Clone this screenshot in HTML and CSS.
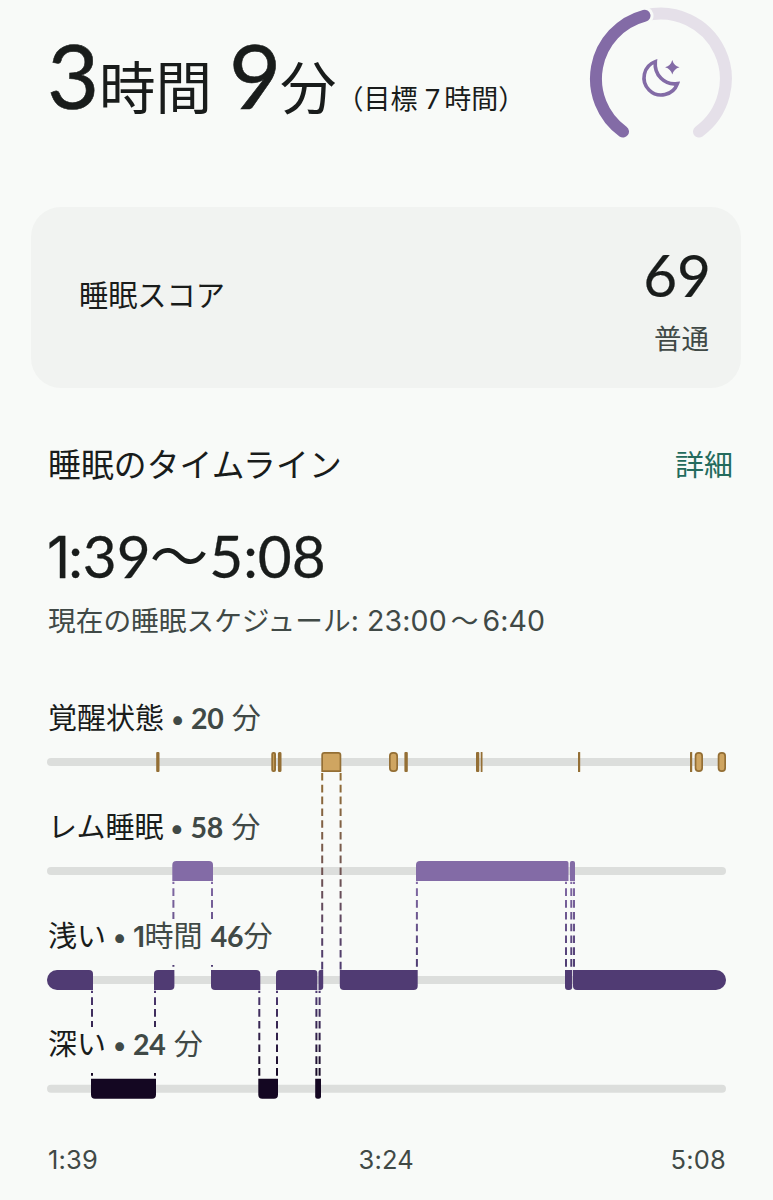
FILE: index.html
```html
<!DOCTYPE html>
<html lang="ja">
<head>
  <meta charset="UTF-8">
  <title>睡眠</title>
  <link rel="stylesheet" href="styles.css">
</head>
<body>
  <header class="summary">
    <div class="duration">
      <span class="num">3</span><span class="unit">時間</span>
      <span class="num nine">9</span><span class="unit">分</span>
      <span class="goal">（目標<span class="seven">7</span>時間）</span>
    </div>
    <svg class="ring" width="144" height="144" viewBox="0 0 144 144">
      <path class="ring-track" d="M55.5 8.7 A65.2 65.2 0 0 1 110 124.6"/>
      <path class="ring-gap" d="M50 10.5 L55.5 8.8"/>
      <path class="ring-value" d="M34 124.6 A65.2 65.2 0 0 1 55.5 8.7"/>
      <path class="moon" d="M66.3 54.6 A17.2 17.2 0 1 0 88.4 76.6 C75.5 78.5 65 68 66.3 54.6 Z"/>
      <path class="star" d="M83.3 53 Q84.8 58.7 90.5 60.3 Q84.8 61.9 83.3 67.6 Q81.8 61.9 76.1 60.3 Q81.8 58.7 83.3 53 Z"/>
    </svg>
  </header>

  <section class="score">
    <h2>睡眠スコア</h2>
    <div class="score-value">
      <div class="points">69</div>
      <div class="rating">普通</div>
    </div>
  </section>

  <section class="timeline">
    <div class="timeline-head">
      <h2>睡眠のタイムライン</h2>
      <a class="more">詳細</a>
    </div>
    <div class="range"><span class="one">1</span>:39<span class="wave">〜</span>5:08</div>
    <div class="schedule">現在の睡眠スケジュール<span class="clock">: 23:00</span><span class="tilde">〜</span><span class="clock">6:40</span></div>

    <div class="chart">
      <svg id="stages" width="679" height="410" viewBox="0 0 679 410">
        <defs>
          <linearGradient id="awakeLight" gradientUnits="userSpaceOnUse" x1="0" y1="76" x2="0" y2="274">
            <stop offset="0" stop-color="#946f35"/><stop offset="1" stop-color="#4d3a70"/>
          </linearGradient>
          <linearGradient id="remLight" gradientUnits="userSpaceOnUse" x1="0" y1="185" x2="0" y2="274">
            <stop offset="0" stop-color="#836ba6"/><stop offset="1" stop-color="#4c3a70"/>
          </linearGradient>
          <linearGradient id="lightDeep" gradientUnits="userSpaceOnUse" x1="0" y1="294" x2="0" y2="383">
            <stop offset="0" stop-color="#4f3b73"/><stop offset="1" stop-color="#140722"/>
          </linearGradient>
        </defs>
      </svg>
      <div class="labels">
        <div class="label"><span class="name">覚醒状態<b>•</b></span><span class="time"><i>20</i> 分</span></div>
        <div class="label"><span class="name">レム睡眠<b>•</b></span><span class="time"><i>58</i> 分</span></div>
        <div class="label"><span class="name">浅い<b>•</b></span><span class="time"><i class="one">1</i>時間 <i>46</i>分</span></div>
        <div class="label"><span class="name">深い<b>•</b></span><span class="time"><i>24</i> 分</span></div>
      </div>
    </div>
    <div class="axis"><span>1:39</span><span class="mid">3:24</span><span>5:08</span></div>
  </section>

  <script>
    const svg = document.getElementById('stages');
    const rowY = { awake: 56, rem: 165, light: 274, deep: 382.7 };

    // [x1, x2, radii: top-left, top-right, bottom-right, bottom-left]
    const segments = {
      awake: [
        [109.2, 112.5, 1], [224.3, 229, 2], [230.9, 234.5, 1.5],
        [274.3, 294.3, 3, 3, 0.5, 0.5], [342, 351, 4],
        [357.4, 360.8, 1], [429, 432.3, 1], [433.7, 435.5, 0.5],
        [531, 533.2, 0.5], [643, 645.2, 0.5], [647.7, 656, 4], [670.7, 679, 4]
      ],
      rem: [
        [125.3, 166, 4, 4, 0, 0], [369, 521.5, 4, 2, 0, 0], [522.9, 528, 2, 2, 0, 0]
      ],
      light: [
        [0, 46, 10, 4, 0, 10], [107, 127.4, 4, 0, 4, 0], [164, 213.3, 0, 4, 0, 4],
        [229, 270.3, 4, 3, 0, 0], [271.5, 276.2, 2, 0, 3, 0], [292.8, 370.7, 0, 0, 4, 4],
        [518, 525.2, 0, 0, 3, 3], [526, 679, 0, 10, 10, 4]
      ],
      deep: [
        [44, 109, 0, 0, 4, 4], [211.3, 231, 0, 0, 4, 4], [268.2, 274, 0, 0, 2.5, 2.5]
      ]
    };

    const links = [
      { color: 'awakeLight', from: 77, to: 274, offset: 0, xs: [275.2, 293.6] },
      { color: 'remLight', from: 185.7, to: 273, offset: 5.2, xs: [126.4, 165, 369.9, 519, 524.3, 527] },
      { color: 'lightDeep', from: 294.7, to: 381, offset: 5.2, xs: [45, 108, 212.3, 230, 269.4, 272.6] }
    ];

    function add(tag, attrs) {
      const el = document.createElementNS('http://www.w3.org/2000/svg', tag);
      for (const [k, v] of Object.entries(attrs)) el.setAttribute(k, v);
      svg.appendChild(el);
    }

    function roundRect(x1, x2, y, h, tl, tr = tl, br = tl, bl = tl) {
      return `M${x1 + tl} ${y} H${x2 - tr} a${tr} ${tr} 0 0 1 ${tr} ${tr}
        V${y + h - br} a${br} ${br} 0 0 1 ${-br} ${br}
        H${x1 + bl} a${bl} ${bl} 0 0 1 ${-bl} ${-bl}
        V${y + tl} a${tl} ${tl} 0 0 1 ${tl} ${-tl} Z`;
    }

    for (const y of Object.values(rowY)) {
      add('rect', { class: 'track', x: 0, y: y + 6, width: 679, height: 8, rx: 4 });
    }
    for (const l of links) {
      for (const x of l.xs) {
        add('path', { class: 'link', d: `M${x} ${l.from} V${l.to}`,
          stroke: `url(#${l.color})`, 'stroke-dashoffset': l.offset });
      }
    }
    for (const [stage, list] of Object.entries(segments)) {
      for (const [x1, x2, ...r] of list) {
        add('path', { class: stage, d: roundRect(x1, x2, rowY[stage], 20, ...r) });
        // awake blocks wide enough get a lighter fill inside a darker edge
        if (stage === 'awake' && x2 - x1 > 4) {
          const w = x2 - x1 > 6 ? 1.7 : 1.9;
          add('path', { class: 'awake-fill', d: roundRect(x1 + w, x2 - w, rowY.awake + 1.7, 16.6, ...r.map(v => Math.min((x2 - x1) / 2 - w, Math.max(0, v - 1.7)))) });
        }
      }
    }
  </script>
</body>
</html>
```
FILE: styles.css
```css
* { box-sizing: border-box; }

body {
  margin: 0;
  width: 773px;
  height: 1200px;
  overflow: hidden;
  background: #f8faf8;
  color: #191c1b;
  font-family: Inter, "Noto Sans CJK JP", sans-serif;
}

h2 {
  margin: 0;
  font-weight: 400;
}

.summary {
  display: flex;
  justify-content: space-between;
  height: 207px;
  padding: 7px 40px 0 47px;
}

.duration {
  display: flex;
  align-items: baseline;
  height: 134px;
  line-height: 134px;
  white-space: nowrap;
}
.num {
  width: 52px;
  font-family: Lato, sans-serif;
  font-size: 90px;
  letter-spacing: -2px;
  -webkit-text-stroke: 0.6px #191c1b;
}
.nine { margin-left: 17px; width: 51px; }
.unit {
  font-family: "Noto Sans CJK JP", sans-serif;
  font-size: 56.5px;
  font-weight: 400;
}
.goal { font-size: 27px; }
.seven { margin: 0 4px 0 7px; font-family: Lato, sans-serif; }

.ring { fill: none; }
.ring path { stroke-linecap: round; }
.ring-track { stroke: #e5e0e9; stroke-width: 12; }
.ring-gap { stroke: #f8faf8; stroke-width: 18; }
.ring-value { stroke: #836ba6; stroke-width: 12; }
.moon { stroke: #836ba6; stroke-width: 3.6; }
.star { fill: #836ba6; }

.score {
  display: flex;
  justify-content: space-between;
  align-items: center;
  width: 710px;
  height: 181px;
  margin-left: 31px;
  padding: 0 32px 0 48px;
  border-radius: 30px;
  background: #f1f3f1;
}
.score h2 {
  padding-bottom: 9px;
  font-size: 29.2px;
}
.score-value {
  padding-top: 13px;
  text-align: right;
}
.points {
  margin-right: -2px;
  font-family: Lato, sans-serif;
  font-size: 58.5px;
  line-height: 70px;
  -webkit-text-stroke: 0.2px #191c1b;
}
.rating {
  font-size: 27.5px;
  line-height: 61px;
  color: #404946;
}

.timeline { padding: 56px 40px 0 48px; }
.timeline-head {
  display: flex;
  justify-content: space-between;
  height: 42px;
  line-height: 43px;
}
.timeline-head h2 {
  font-size: 32.8px;
  letter-spacing: 0.1px;
}
.more {
  color: #246b5d;
  font-size: 29px;
}

.range {
  height: 70px;
  margin-top: 35px;
  margin-left: -1px;
  font-family: Lato, "Noto Sans CJK JP", sans-serif;
  font-size: 58.5px;
  line-height: 68px;
  -webkit-text-stroke: 0.3px #191c1b;
}
.range .one {
  font-family: Inter, sans-serif;
  font-size: 57px;
  letter-spacing: -2px;
}
.range .wave {
  margin: 0 1px 0 -1px;
  -webkit-text-stroke: 0;
}
.schedule {
  height: 40px;
  margin-top: 9px;
  font-size: 27.7px;
  line-height: 41px;
  color: #404946;
  white-space: nowrap;
}
.clock {
  font-size: 28.5px;
  letter-spacing: 0.1px;
}
.tilde { margin: 0 4px; }

.chart {
  display: grid;
  width: 679px;
  height: 410px;
  margin: 56px 0 0 -1px;
}
.chart > * { grid-area: 1 / 1; }

.track { fill: #dcdedc; }
.link { stroke-width: 2; stroke-dasharray: 7.6 4.2; }
.awake { fill: #946f35; }
.awake-fill { fill: #cfa561; }
.rem { fill: #836ba6; }
.light { fill: #503b73; }
.deep { fill: #140722; }

.labels {
  display: grid;
  grid-template-rows: repeat(4, 108.8px);
  justify-items: start;
}
.label {
  height: 46px;
  margin-top: 5px;
  padding-left: 1px;
  font-size: 29px;
  line-height: 35px;
  background: #f8faf8;
  white-space: nowrap;
}
.label b {
  display: inline-block;
  width: 27px;
  text-align: center;
  color: #404946;
  font-size: 28px;
  font-weight: 400;
}
.time { color: #404946; }
.time i {
  font-family: Lato, sans-serif;
  font-size: 28.5px;
  font-style: normal;
  font-weight: 700;
  letter-spacing: -0.2px;
}
.time .one {
  font-family: Inter, sans-serif;
  font-weight: 600;
  letter-spacing: -0.5px;
}

.axis {
  display: flex;
  justify-content: space-between;
  width: 678px;
  margin-top: 36px;
  font-size: 25.5px;
  line-height: 36px;
  letter-spacing: 0.2px;
  color: #404946;
}
.mid { padding-left: 4px; }
```
